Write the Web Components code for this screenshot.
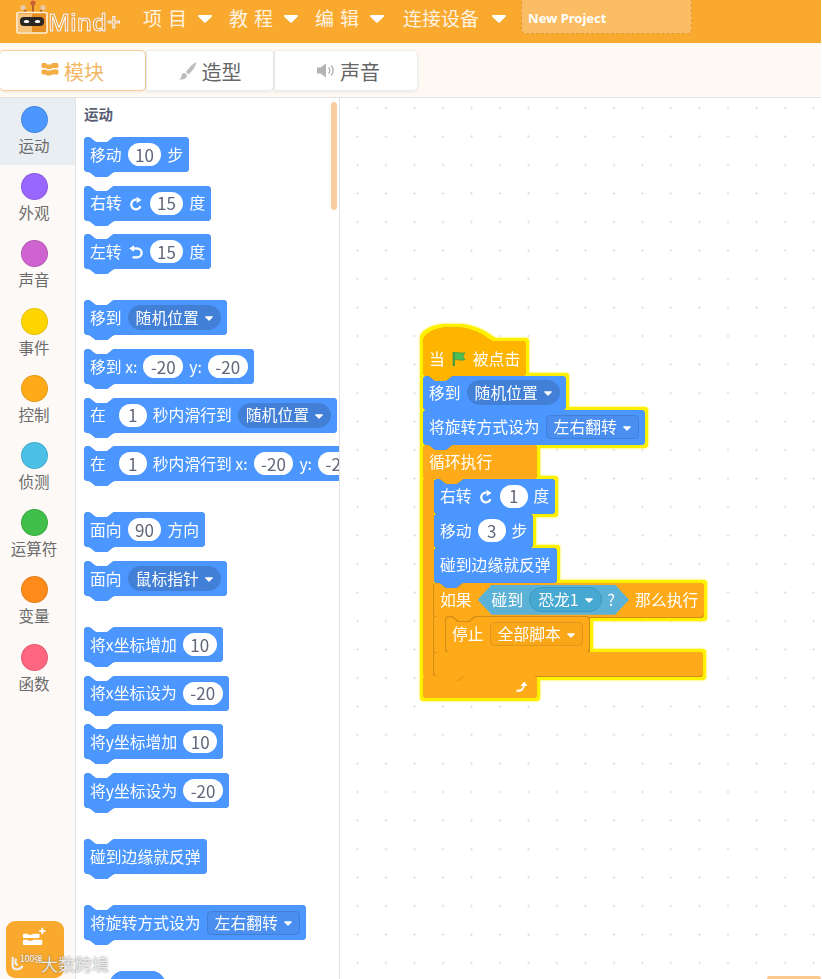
<!DOCTYPE html>
<html lang="zh">
<head>
<meta charset="utf-8">
<title>Mind+</title>
<style>
  html, body { margin: 0; background: #fff; overflow: hidden; }
  body { width: 822px; height: 979px; font-family: "Noto Sans CJK SC", "Noto Sans", sans-serif; }
</style>
</head>
<body>
<mind-app>
  <app-header slot="header">
    <menu-item wide>项目</menu-item>
    <menu-item wide>教程</menu-item>
    <menu-item wide>编辑</menu-item>
    <menu-item style="margin-left:2px">连接设备</menu-item>
  </app-header>
  <tab-bar slot="tabs">
    <tab-item icon="blocks" active>模块</tab-item>
    <tab-item icon="brush" style="width:128px">造型</tab-item>
    <tab-item icon="sound" style="width:144px;padding-left:5px">声音</tab-item>
  </tab-bar>
  <cat-sidebar slot="cats">
    <cat-item color="#4c97ff" active>运动</cat-item>
    <cat-item color="#9966ff">外观</cat-item>
    <cat-item color="#cf63cf">声音</cat-item>
    <cat-item color="#ffd500">事件</cat-item>
    <cat-item color="#ffab19">控制</cat-item>
    <cat-item color="#4cbfe6">侦测</cat-item>
    <cat-item color="#40bf4a">运算符</cat-item>
    <cat-item color="#ff8c1a">变量</cat-item>
    <cat-item color="#ff6680">函数</cat-item>
  </cat-sidebar>
  <block-palette slot="palette" heading="运动">
    <sb-block>移动 <sb-num>10</sb-num> 步</sb-block>
    <sb-block>右转 <sb-icon name="cw"></sb-icon> <sb-num>15</sb-num> 度</sb-block>
    <sb-block>左转 <sb-icon name="ccw"></sb-icon> <sb-num>15</sb-num> 度</sb-block>
    <sb-block group>移到 <sb-drop>随机位置</sb-drop></sb-block>
    <sb-block>移到 x: <sb-num>-20</sb-num> y: <sb-num>-20</sb-num></sb-block>
    <sb-block><span class="wide">在</span> <sb-num>1</sb-num> 秒内滑行到 <sb-drop>随机位置</sb-drop></sb-block>
    <sb-block><span class="wide">在</span> <sb-num>1</sb-num> 秒内滑行到 x: <sb-num>-20</sb-num> y: <sb-num>-20</sb-num></sb-block>
    <sb-block group>面向 <sb-num>90</sb-num> 方向</sb-block>
    <sb-block>面向 <sb-drop>鼠标指针</sb-drop></sb-block>
    <sb-block group>将x坐标增加 <sb-num>10</sb-num></sb-block>
    <sb-block>将x坐标设为 <sb-num>-20</sb-num></sb-block>
    <sb-block>将y坐标增加 <sb-num>10</sb-num></sb-block>
    <sb-block>将y坐标设为 <sb-num>-20</sb-num></sb-block>
    <sb-block group>碰到边缘就反弹</sb-block>
    <sb-block group>将旋转方式设为 <sb-drop shape="rect">左右翻转</sb-drop></sb-block>
    <sb-block group shape="round"></sb-block>
  </block-palette>
  <script-area slot="workspace">
    <sb-stack style="left:83px;top:229px">
      <sb-block shape="hat" color="events">当 <sb-icon name="flag"></sb-icon> 被点击</sb-block>
      <sb-block>移到 <sb-drop>随机位置</sb-drop></sb-block>
      <sb-block>将旋转方式设为 <sb-drop shape="rect">左右翻转</sb-drop></sb-block>
      <sb-c style="--c-w:114px;--foot-h:22.500px;--arm:11px" nobump>
        <span slot="head">循环执行</span>
        <sb-block>右转 <sb-icon name="cw"></sb-icon> <sb-num>1</sb-num> 度</sb-block>
        <sb-block>移动 <sb-num>3</sb-num> 步</sb-block>
        <sb-block>碰到边缘就反弹</sb-block>
        <sb-c nested style="--c-w:269px;--foot-h:24px;--arm:12px">
          <span slot="head">如果</span>
          <sb-bool slot="head">碰到 <sb-drop tone="sense">恐龙1</sb-drop> ?</sb-bool>
          <span slot="head">那么执行</span>
          <sb-block color="control">停止 <sb-drop shape="rect" tone="control">全部脚本</sb-drop></sb-block>
        </sb-c>
        <sb-icon slot="foot" name="loop"></sb-icon>
      </sb-c>
    </sb-stack>
    <div slot="corner"></div>
  </script-area>
  <ext-button slot="overlay"></ext-button>
</mind-app>

<script>
const FONT = '"Noto Sans CJK SC", "Noto Sans", sans-serif';

// everything gets an open shadow root from this
class Shadowed extends HTMLElement {
  connectedCallback() {
    if (this.shadowRoot) return;
    this.attachShadow({ mode: 'open' });
    this.shadowRoot.innerHTML = this.render();
  }
}

class MindApp extends Shadowed {
  render() {
    return `<style>
      :host { display: flex; flex-direction: column; width: 821px; height: 979px; position: relative; overflow: hidden; }
      .main { flex: 1; min-height: 0; display: grid; grid-template-columns: 76px 264px 1fr; position: relative; }
    </style>
    <slot name="header"></slot>
    <slot name="tabs"></slot>
    <div class="main">
      <slot name="cats"></slot>
      <slot name="palette"></slot>
      <slot name="workspace"></slot>
      <slot name="overlay"></slot>
    </div>`;
  }
}

class AppHeader extends Shadowed {
  render() {
    return `<style>
      :host { display: flex; align-items: center; gap: 17px; height: 43px; box-sizing: border-box; padding: 0 0 7px 15px; background: #f9a92e; color: #fff; font-family: ${FONT}; }
      .logo { display: flex; align-self: flex-start; width: 105px; margin-right: 6px; height: 43px; }
      .logo svg { width: 34px; height: 36px; flex: none; }
      .logo span { margin: 5px 0 0 -1px; font: 600 24px/34px "Open Sans", sans-serif; color: #f3a23a; -webkit-text-stroke: 1px #fff; filter: drop-shadow(.6px .6px 0 #a9601a); }
      .title { align-self: flex-start; width: 171px; height: 35px; margin: -1px 0 0 -2px; box-sizing: border-box; padding: 0 0 0 6px; background: #fbbd63; border: 1px dashed #e2952b; border-radius: 0 0 5px 5px; font: 700 13px/36px "Noto Sans", sans-serif; }
    </style>
    <div class="logo">
      <svg viewBox="0 0 34 36" aria-hidden="true">
        <path d="M18 12V4" stroke="#b4622a" stroke-width="2"/>
        <path d="M11 12 8 8M25 12l3-4" stroke="#b4622a" stroke-width="2"/>
        <circle cx="18" cy="3" r="2.6" fill="#c9603a"/>
        <circle cx="8" cy="7.5" r="2.6" fill="#e8c9a8"/>
        <circle cx="28" cy="7.5" r="2.6" fill="#e8c9a8"/>
        <rect x="2" y="12.5" width="30" height="20.5" rx="1.5" fill="#e58e23" stroke="#fff3dc" stroke-width="1.6"/>
        <path d="M3 14h14v18H3z" fill="#f6c27a"/>
        <rect x="5" y="17" width="24" height="9" rx="4" fill="#2a2622"/>
        <ellipse cx="11.5" cy="21.5" rx="2.8" ry="1.6" fill="#fff"/>
        <ellipse cx="22.5" cy="21.5" rx="2.8" ry="1.6" fill="#fff"/>
      </svg>
      <span>Mind+</span>
    </div>
    <slot></slot>
    <div class="title">New Project</div>`;
  }
}

class MenuItem extends Shadowed {
  render() {
    return `<style>
      :host { display: inline-flex; align-items: center; gap: 13px; font-size: 19px; line-height: 26px; color: #fff3e0; }
      :host([wide]) { letter-spacing: 6px; gap: 5px; }
      svg { width: 14px; height: 8px; fill: #fff; flex: none; margin-top: 2px; }
    </style><slot></slot><svg viewBox="0 0 14 8"><path d="M1 0h12a1 1 0 0 1 .7 1.7L7.7 7.6a1 1 0 0 1-1.4 0L.3 1.7A1 1 0 0 1 1 0z"/></svg>`;
  }
}

class TabBar extends Shadowed {
  render() {
    return `<style>
      :host { display: flex; height: 55px; box-sizing: border-box; padding-top: 7px; align-items: flex-start; background: #fff9f3; border-bottom: 1px solid #e3e3e3; font-family: ${FONT}; }
    </style><slot></slot>`;
  }
}

const TAB_ICONS = {
  blocks: '<path fill="#f2ae45" d="M2 1h3l1 1.500h4L11 1h5a1.500 1.500 0 0 1 1.500 1.500v2A1.500 1.500 0 0 1 16 6h-5l-1 1H6L5 6H2A1.500 1.500 0 0 1 .5 4.500v-2A1.500 1.500 0 0 1 2 1zM2 7.500h3l1 1h4l1-1h5A1.500 1.500 0 0 1 17.500 9v2a1.500 1.500 0 0 1-1.500 1.500H11l-1 1H6l-1-1H2A1.500 1.500 0 0 1 .5 11V9A1.500 1.500 0 0 1 2 7.500z"/>',
  brush: '<path fill="#bdbdbd" d="M17.500 0C14 1.500 9.500 6 7 10l2.500 2.500C13 9.500 16.500 5 17.500 0zM5.500 11C3 11 2.500 13 2.300 14.500 2.100 16 1.200 16.800 0 17c2.500 1 6.500.8 7.800-2.200.5-1.300-.5-3.800-2.300-3.800z"/>',
  sound: '<path fill="#b3b3b3" d="M0 5.500h3.500L9 1.500v14l-5.500-4H0z"/><path fill="none" stroke="#b3b3b3" stroke-width="1.400" d="M11.500 5.500a4 4 0 0 1 0 6M14 3.500a7 7 0 0 1 0 10"/>'
};

class TabItem extends Shadowed {
  render() {
    return `<style>
      :host { display: flex; align-items: center; justify-content: center; gap: 5px; width: 147px; height: 41px; box-sizing: border-box; padding-top: 1px; background: #fff; color: #666; font-size: 20px; border: 1px solid #eee; border-left-color: #e6e6e6; border-radius: 0 5px 5px 0; box-shadow: 0 1px 3px rgba(0,0,0,.08); }
      :host([active]) { color: #f1b765; border-color: #f6cf96; border-radius: 5px; margin-left: -1px; }
      svg { width: 18px; height: 18px; flex: none; }
    </style><svg viewBox="0 0 18 18">${TAB_ICONS[this.getAttribute('icon')]}</svg><slot></slot>`;
  }
}

class CatSidebar extends Shadowed {
  render() {
    return `<style>
      :host { display: flex; flex-direction: column; background: #fcf9f6; border-right: 1px solid #e3e3e3; font-family: ${FONT}; }
    </style><slot></slot>`;
  }
}

class CatItem extends Shadowed {
  render() {
    return `<style>
      :host { display: flex; flex-direction: column; align-items: center; gap: 2px; height: 67.200px; box-sizing: border-box; padding: 8px 7px 0 0; color: #6b6b6b; font-size: 15.500px; line-height: 21px; }
      :host([active]) { background: #e9eef2; }
      i { width: 27px; height: 27px; box-sizing: border-box; border-radius: 50%; background: ${this.getAttribute('color')}; border: 1px solid rgba(0,0,0,.1); }
    </style><i></i><slot></slot>`;
  }
}

class BlockPalette extends Shadowed {
  render() {
    return `<style>
      :host { display: block; position: relative; overflow: hidden; box-sizing: border-box; padding-left: 8px; border-right: 1px solid #e3e3e3; background: #fff; font-family: ${FONT}; }
      h3 { margin: 6px 0 13px; font-size: 14.500px; line-height: 20px; font-weight: 700; color: #575e75; }
      .list { display: flex; flex-direction: column; align-items: flex-start; gap: 13.700px; }
      .bar { position: absolute; left: 255px; top: 4px; width: 6px; height: 108px; border-radius: 3px; background: #f9cd9d; }
    </style>
    <h3>${this.getAttribute('heading')}</h3>
    <div class="list"><slot></slot></div>
    <div class="bar"></div>`;
  }
}

class ScriptArea extends Shadowed {
  render() {
    return `<style>
      :host { display: block; position: relative; overflow: hidden; background-color: #fff;
        background-image: radial-gradient(circle, #e4e4e4 1px, transparent 1.300px);
        background-size: 28.500px 28.500px; background-position: 3.250px -4.250px; font-family: ${FONT}; }
      ::slotted([slot=corner]) { position: absolute; right: 0; bottom: 0; width: 54px; height: 3px; border-radius: 3px 3px 0 0; background: #fbc98e; }
    </style><slot></slot><slot name="corner"></slot>`;
  }
}

// yellow glow follows the whole silhouette of the running stack
class SbStack extends Shadowed {
  render() {
    return `<style>
      :host { position: absolute; display: flex; flex-direction: column; align-items: flex-start; --bh: 34.500px;
        filter: drop-shadow(3px 0 0 #fff000) drop-shadow(-3px 0 0 #fff000) drop-shadow(0 3px 0 #fff000) drop-shadow(0 -3px 0 #fff000) drop-shadow(0 0 1px #fff000); }
    </style><slot></slot>`;
  }
}

class SbBlock extends Shadowed {
  render() {
    return `<style>
      :host { display: inline-flex; flex-direction: column; flex: none; position: relative; --c: #4c97ff; --edge: #4280d7; color: #fff; filter: drop-shadow(0 0 .5px var(--edge)); }
      :host([color=control]) { --c: #ffab19; --edge: #d08c17; filter: drop-shadow(-1px 0 0 var(--edge)) drop-shadow(1px 0 0 var(--edge)) drop-shadow(0 1px 0 var(--edge)) drop-shadow(0 -.5px 0 var(--edge)); }
      :host([color=events]) { --c: #ffb400; --edge: #d99a00; }
      :host([noedge]) { filter: none; }
      :host([group]) { margin-top: 17.300px; }
      .dome { display: none; width: 72px; height: 15px; margin-bottom: -1px; fill: var(--c); }
      .top { display: flex; height: 5px; }
      .l { flex: none; width: var(--notch-at, 4px); background: var(--c); border-top-left-radius: 4px; }
      .r { flex: 1; background: var(--c); border-top-right-radius: 4px; }
      .notch { flex: none; width: 27px; height: 5px; fill: var(--c); }
      .body { display: flex; align-items: center; gap: 6px; height: calc(var(--bh, 35px) - 5px); box-sizing: border-box; padding: 0 6px 5px; background: var(--c); border-radius: 0 0 4px 4px; white-space: nowrap; font-size: 15.800px; line-height: 24px; }
      .bump { position: absolute; top: 100%; left: var(--bump-at, 4px); margin-top: -1px; width: 27px; height: 6px; fill: var(--c); }
      :host([nobump]) .bump { display: none; }
      :host([shape=hat]) { margin-bottom: -.5px; }
      :host([shape=hat]) .top { display: none; }
      :host([shape=hat]) .dome { display: block; }
      :host([shape=hat]) .body { height: 35px; padding-bottom: 0; border-radius: 0 4px 4px 4px; }
      :host([shape=round]) .top, :host([shape=round]) .bump { display: none; }
      :host([shape=round]) { margin-left: 25px; }
      :host([shape=round]) .body { width: 57px; height: 30px; border-radius: 15px; }
      ::slotted(.wide) { margin-right: 7px; }
    </style>
    <svg class="dome" viewBox="0 0 72 15"><path d="M0 15C0 6 13 0 29 0c16 0 27 5 35 10.500 3 2.200 5 3.500 8 4.500z"/></svg>
    <div class="top"><div class="l"></div>
      <svg class="notch" viewBox="0 0 27 5"><path d="M0 0C2 0 3 1 4.500 2.500L6.500 4C7 4.600 8 5 9 5H18C19 5 20 4.600 20.500 4L22.500 2.500C24 1 25 0 27 0V5H0Z"/></svg>
      <div class="r"></div></div>
    <div class="body"><slot></slot></div>
    <svg class="bump" viewBox="0 0 27 6"><path d="M0 0V1C2 1 3 2 4.500 3.500L6.500 5C7 5.600 8 6 9 6H18C19 6 20 5.600 20.500 5L22.500 3.500C24 2 25 1 27 1V0Z"/></svg>`;
  }
}

// C shaped block: head row, arm with the inner blocks, foot row
class SbC extends Shadowed {
  render() {
    const nobump = this.hasAttribute('nobump') ? 'nobump' : '';
    return `<style>
      :host { display: inline-flex; flex-direction: column; align-items: flex-start; flex: none; position: relative; filter: drop-shadow(0 0 .6px #b87710); }
      :host([nested]) { filter: drop-shadow(-1px 0 0 #d08c17) drop-shadow(0 1px 0 #d08c17); }
      .head, .foot { min-width: var(--c-w); }
      .head { --bump-at: 16px; }
      .foot { --notch-at: 16px; --bh: var(--foot-h); }
      .mid { display: flex; }
      .arm { flex: none; width: var(--arm); background: #ffab19; }
      .inner { display: flex; flex-direction: column; align-items: flex-start; }
      .push { flex: 1; }
    </style>
    <sb-block class="head" color="control" noedge><slot name="head"></slot></sb-block>
    <div class="mid"><div class="arm"></div><div class="inner"><slot></slot></div></div>
    <sb-block class="foot" color="control" noedge ${nobump}><span class="push"></span><slot name="foot"></slot></sb-block>`;
  }
}

class SbNum extends Shadowed {
  render() {
    return `<style>
      :host { display: inline-flex; align-items: center; justify-content: center; flex: none; height: 23px; min-width: 28px; box-sizing: border-box; padding: 0 7.500px; border-radius: 12px; background: #fff; color: #62667a; font-size: 17px; }
    </style><slot></slot>`;
  }
}

class SbDrop extends Shadowed {
  render() {
    return `<style>
      :host { display: inline-flex; align-items: center; gap: 6px; flex: none; height: 25px; box-sizing: border-box; padding: 0 8px; border-radius: 13px; background: #4280d7; color: #fff; }
      :host([shape=rect]) { height: 24px; border-radius: 4px; background: #4a8ff0; border: 1px solid #4280d7; padding: 0 7px; }
      :host([tone=control]) { background: #f9a617; border-color: #e0951c; }
      :host([tone=sense]) { background: #47a8d1; border: 1px solid #3d97bf; }
      svg { width: 8px; height: 5px; fill: #fff; flex: none; margin-top: 2px; }
    </style><slot></slot><svg viewBox="0 0 9 5"><path d="M.8 0h7.400a.7.700 0 0 1 .5 1.200L5 4.700a.7.700 0 0 1-1 0L.3 1.200A.7.700 0 0 1 .8 0z"/></svg>`;
  }
}

class SbBool extends Shadowed {
  render() {
    return `<style>
      :host { display: inline-flex; align-items: center; gap: 6px; flex: none; height: 30px; margin-bottom: -5px; margin-top: -5px; box-sizing: border-box; padding: 0 14px; background: #5cb1d6; color: #fff;
        clip-path: polygon(14px 0, calc(100% - 14px) 0, 100% 50%, calc(100% - 14px) 100%, 14px 100%, 0 50%); }
    </style><slot></slot>`;
  }
}

const SB_ICONS = {
  cw: '<path fill="none" stroke="#fff" stroke-width="2.300" d="M12.500 11.300A4.800 4.800 0 1 1 8.600 4.700"/><path fill="#fff" d="M8.600 1.800 13.500 5 8.600 8.200z"/>',
  ccw: '<path fill="none" stroke="#fff" stroke-width="2.300" d="M5 4.500h4.200a4.400 4.400 0 0 1 0 8.800H4.500"/><path fill="#fff" d="M6 1.200 1.200 4.500 6 7.800z"/>',
  flag: '<path fill="#4cbf56" stroke="#3f9d48" stroke-width=".8" d="M3 1.800c3-1 6 1.200 11 0-.8 1.500-2 3-2 3.500s1.200 2 2 3.500c-5 1.200-8-1-11 0z"/><path stroke="#3f9d48" stroke-width="2.200" d="M2.800 1v14"/>',
  loop: '<path fill="none" stroke="#fff" stroke-width="2" d="M1.500 11.500c4 1.200 7-1 7.500-5.500"/><path fill="#fff" d="M5.500 7 9.200 2.500 12.500 7z"/>'
};

class SbIcon extends Shadowed {
  render() {
    return `<style>
      :host { display: inline-flex; flex: none; width: 16px; height: 16px; }
      svg { width: 16px; height: 16px; }
    </style><svg viewBox="0 0 16 16">${SB_ICONS[this.getAttribute('name')]}</svg>`;
  }
}

// lower left extension button, with the picture's watermark over it
class ExtButton extends Shadowed {
  render() {
    return `<style>
      :host { position: absolute; left: 6px; top: 823px; width: 58px; height: 57px; border-radius: 9px; background: #f9a92e; font-family: ${FONT}; }
      svg.tool { position: absolute; left: 16px; top: 6px; width: 24px; height: 22px; }
      .mark { position: absolute; left: 4px; top: 25px; display: flex; white-space: nowrap; color: rgba(240,240,240,.95); text-shadow: 0 0 2px rgba(90,90,90,.8); }
      .mark svg { width: 17px; height: 17px; flex: none; margin-top: 9px; }
      .mark small { font-size: 8.500px; line-height: 12px; margin: 6px 0 0 -7px; width: 21px; color: #fff; }
      .mark b { font-size: 17px; font-weight: 400; line-height: 24px; margin: 6px 0 0 0; }
    </style>
    <svg class="tool" viewBox="0 0 26 22">
      <path fill="#fff" d="M2 6.500h4l1 1h4l1-1h6a1 1 0 0 1 1 1V10a1 1 0 0 1-1 1H2a1 1 0 0 1-1-1V7.500a1 1 0 0 1 1-1zM2 13h4l1 1h4l1-1h9a1 1 0 0 1 1 1v3.500a1 1 0 0 1-1 1H2a1 1 0 0 1-1-1V14a1 1 0 0 1 1-1z"/>
      <path stroke="#fff" stroke-width="2" d="M22 0v7M18.500 3.500h7"/>
    </svg>
    <div class="mark">
      <svg viewBox="0 0 19 19"><path fill="none" stroke="#eee" stroke-width="2.400" d="M3 2v11c1 4 9 4 11-1M7 4c-2 3-1 7 2 7"/></svg>
      <small>100强</small><b>大数跨境</b>
    </div>`;
  }
}

customElements.define('mind-app', MindApp);
customElements.define('app-header', AppHeader);
customElements.define('menu-item', MenuItem);
customElements.define('tab-bar', TabBar);
customElements.define('tab-item', TabItem);
customElements.define('cat-sidebar', CatSidebar);
customElements.define('cat-item', CatItem);
customElements.define('block-palette', BlockPalette);
customElements.define('script-area', ScriptArea);
customElements.define('sb-stack', SbStack);
customElements.define('sb-block', SbBlock);
customElements.define('sb-c', SbC);
customElements.define('sb-num', SbNum);
customElements.define('sb-drop', SbDrop);
customElements.define('sb-bool', SbBool);
customElements.define('sb-icon', SbIcon);
customElements.define('ext-button', ExtButton);
</script>
</body>
</html>
